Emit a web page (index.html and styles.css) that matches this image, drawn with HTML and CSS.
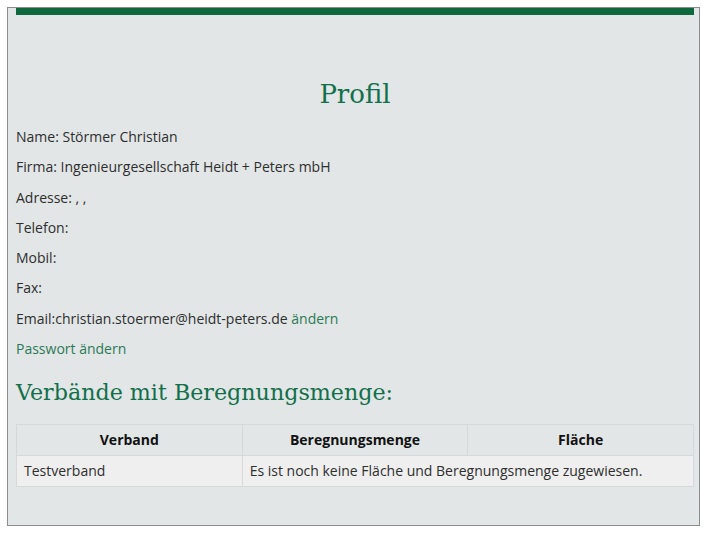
FILE: index.html
```html
<!DOCTYPE html>
<html lang="de">
<head>
<meta charset="utf-8">
<title>Profil</title>
<link rel="stylesheet" href="styles.css">
</head>
<body>
<div class="frame">
  <div class="topbar"></div>
  <h1 class="title">Profil</h1>
  <p>Name: Störmer Christian</p>
  <p>Firma: Ingenieurgesellschaft Heidt + Peters mbH</p>
  <p>Adresse: , ,</p>
  <p>Telefon:</p>
  <p>Mobil:</p>
  <p>Fax:</p>
  <p>Email:christian.stoermer@heidt-peters.de <a href="#" class="link">ändern</a></p>
  <p><a href="#" class="link">Passwort ändern</a></p>
  <h2 class="subtitle">Verbände mit Beregnungsmenge:</h2>
  <table class="grid">
    <thead>
      <tr><th>Verband</th><th>Beregnungsmenge</th><th>Fläche</th></tr>
    </thead>
    <tbody>
      <tr><td>Testverband</td><td colspan="2">Es ist noch keine Fläche und Beregnungsmenge zugewiesen.</td></tr>
    </tbody>
  </table>
</div>
</body>
</html>
```
FILE: styles.css
```css
html, body {
  margin: 0;
  padding: 0;
  background: #ffffff;
}
body {
  font-family: "Open Sans", "Liberation Sans", sans-serif;
  font-size: 14px;
  color: #2e2e2e;
}
.frame {
  margin: 7px 0 0 7px;
  width: 678px;
  height: 517px;
  border: 1px solid #8c8c8c;
  background: #e2e6e7;
  padding: 0 5px 0 8px;
  box-sizing: content-box;
}
.topbar {
  height: 7px;
  background: #0e6a3e;
}
.title {
  font-family: "DejaVu Serif", "Liberation Serif", serif;
  font-weight: normal;
  font-size: 26px;
  color: #11704a;
  text-align: center;
  margin: 62px 0 16px;
  line-height: 34px;
}
p {
  margin: 0 0 10px;
  line-height: 20.3px;
}
.link {
  color: #2b7a55;
  text-decoration: none;
}
.subtitle {
  font-family: "DejaVu Serif", "Liberation Serif", serif;
  font-weight: normal;
  font-size: 22.2px;
  color: #11704a;
  margin: 18px 0 17px;
  line-height: 30px;
}
.grid {
  width: 100%;
  border-collapse: collapse;
  table-layout: fixed;
}
.grid th, .grid td {
  border: 1px solid #d5d9da;
  height: 31px;
  padding: 0 7px;
  box-sizing: border-box;
  line-height: 20px;
}
.grid th {
  font-weight: bold;
  text-align: center;
  color: #111;
}
.grid td {
  background: #efefef;
  text-align: left;
}
```
